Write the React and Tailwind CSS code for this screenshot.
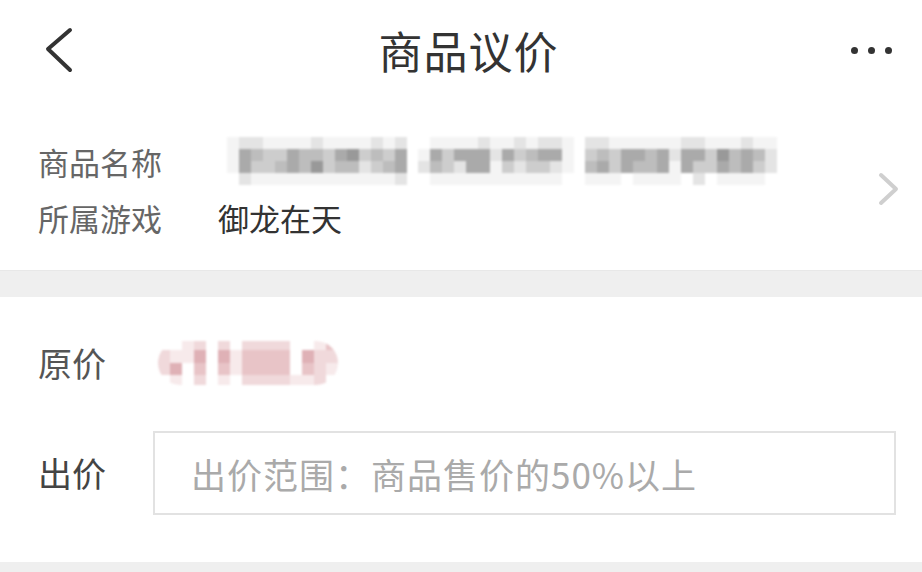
import React from "react";

// shade palettes for the pixelated (mosaic) areas
const grays = [
  "bg-white",
  "bg-[#f4f4f4]",
  "bg-[#e4e4e4]",
  "bg-[#cdcdcd]",
  "bg-[#bdbdbd]",
  "bg-[#aaaaaa]",
  "bg-[#999999]",
];

const pinks = [
  "bg-white",
  "bg-[#f7eaeb]",
  "bg-[#f0d9db]",
  "bg-[#e8c4c7]",
  "bg-[#dfb1b6]",
];

const nameGroups = [
  [
    "122111121111212",
    "154335443563435",
    "153345463442345",
    "021111111111112",
  ],
  [
    "0111121121221",
    "1535552534551",
    "2432551323321",
    "0111111111110",
  ],
  [
    "2211111122111211",
    "3435545255364542",
    "4535445153354532",
    "1110111102011110",
  ],
];

const priceRows = [
  "001202022220013",
  "211404133330422",
  "240303133330321",
  "010201022221120",
];

const Mosaic = ({ rows, palette, cell = "w-[12px]", rowHeights }) => (
  <div className="flex flex-col">
    {rows.map((row, r) => (
      <div key={r} className={`flex ${rowHeights[r]}`}>
        {row.split("").map((c, i) => (
          <div key={i} className={`${cell} h-full ${palette[Number(c)]}`} />
        ))}
      </div>
    ))}
  </div>
);

const App = () => {
  return (
    <div className="w-[922px] h-[572px] bg-white overflow-hidden font-['Noto_Sans_CJK_SC',sans-serif]">
      {/* Header */}
      <div className="h-[100px] flex items-center pl-[45px] pr-[30px]">
        <div className="w-[90px] flex items-center">
          <svg width="30" height="46" viewBox="0 0 30 46" fill="none">
            <polyline
              points="25,3 3,22 25,43"
              stroke="#333"
              strokeWidth="4"
              strokeLinecap="round"
              strokeLinejoin="round"
            />
          </svg>
        </div>
        <div className="flex-1 text-center text-[44px] leading-none text-[#333] tracking-[1px]">
          商品议价
        </div>
        <div className="w-[90px] flex justify-end items-center gap-[10px]">
          <span className="w-[7px] h-[7px] rounded-full bg-[#333]" />
          <span className="w-[7px] h-[7px] rounded-full bg-[#333]" />
          <span className="w-[7px] h-[7px] rounded-full bg-[#333]" />
        </div>
      </div>

      {/* Goods info */}
      <div className="h-[170px] flex items-center pl-[38px] pr-[22px] pt-[8px]">
        <div className="flex-1 flex flex-col text-[31px] leading-none">
          <div className="h-[56px] flex items-center">
            <span className="w-[189px] text-[#666]">商品名称</span>
            <div className="flex gap-[11px] blur-[0.8px]">
              {nameGroups.map((g, i) => (
                <Mosaic
                  key={i}
                  rows={g}
                  palette={grays}
                  rowHeights={["h-[12px]", "h-[12px]", "h-[12px]", "h-[12px]"]}
                />
              ))}
            </div>
          </div>
          <div className="h-[56px] flex items-center">
            <span className="w-[180px] text-[#666]">所属游戏</span>
            <span className="text-[#333]">御龙在天</span>
          </div>
        </div>
        <svg width="22" height="34" viewBox="0 0 22 34" fill="none">
          <polyline
            points="3,3 18,17 3,31"
            stroke="#cfcfcf"
            strokeWidth="4"
            strokeLinecap="round"
            strokeLinejoin="round"
          />
        </svg>
      </div>

      <div className="h-[27px] bg-[#efefef] border-t border-[#e8e8e8]" />

      {/* Offer */}
      <div className="h-[265px] pl-[38px] pr-[26px] pt-[22px] text-[34px] leading-none">
        <div className="h-[88px] flex items-center">
          <span className="w-[120px] text-[#555]">原价</span>
          <div className="rounded-full overflow-hidden blur-[0.8px]">
            <Mosaic
              rows={priceRows}
              palette={pinks}
              cell="w-[12px]"
              rowHeights={["h-[9px]", "h-[13px]", "h-[12px]", "h-[10px]"]}
            />
          </div>
        </div>
        <div className="mt-[24px] h-[84px] flex items-center">
          <span className="w-[115px] text-[#444]">出价</span>
          <input
            type="text"
            placeholder="出价范围：商品售价的50%以上"
            className="flex-1 h-full border-2 border-[#e2e2e2] pl-[36px] text-[35px] tracking-[1px] text-[#333] placeholder:text-[#aaaaaa] outline-none font-['Noto_Sans_CJK_SC',sans-serif]"
          />
        </div>
      </div>

      <div className="h-[10px] bg-[#efefef]" />
    </div>
  );
};

export default App;
